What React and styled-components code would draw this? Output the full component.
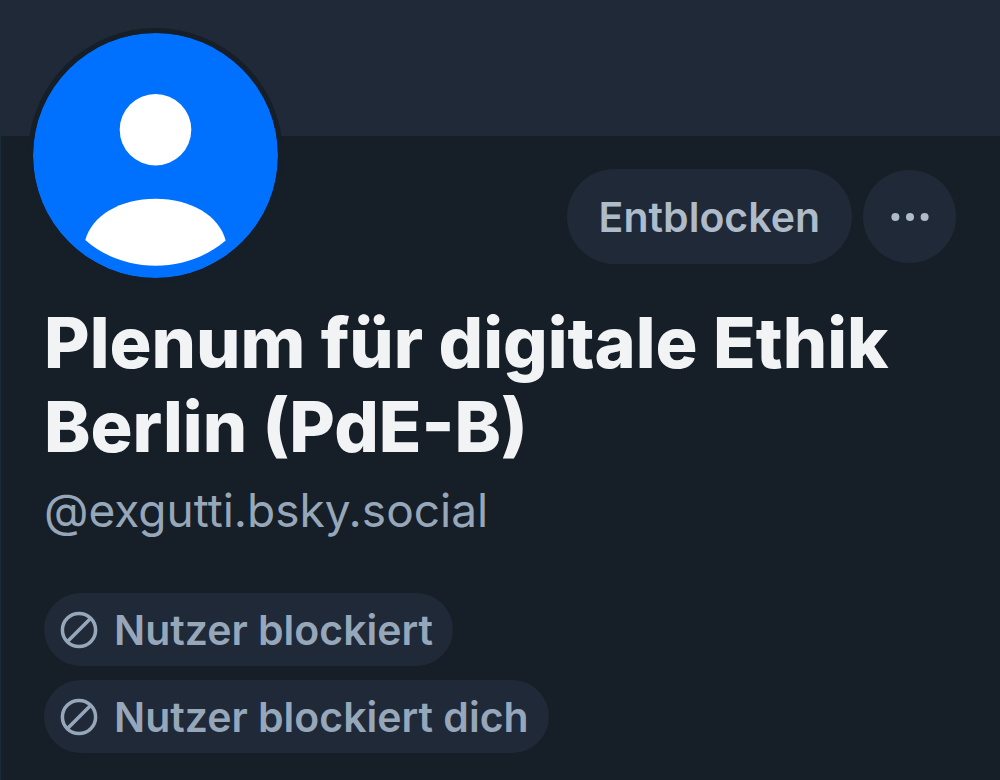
import React from "react";
import styled, { createGlobalStyle, ThemeProvider } from "styled-components";

const theme = {
  background: "#161e27",
  surface: "#202938",
  edge: "#1b2a36",
  accent: "#0070ff",
  title: "#f1f3f5",
  muted: "#96a7ba",
  label: "#aebbc9",
};

const GlobalStyle = createGlobalStyle`
  *, *::before, *::after { box-sizing: border-box; }
  body {
    margin: 0;
    background: ${theme.background};
    font-family: Inter, "Liberation Sans", sans-serif;
  }
`;

const Profile = styled.main`
  min-height: 100vh;
  background: ${(p) => p.theme.background};
  border-left: 1px solid ${(p) => p.theme.edge};
`;

const Banner = styled.div`
  height: 136px;
  background: ${(p) => p.theme.surface};
`;

const Header = styled.header`
  display: flex;
  justify-content: space-between;
  align-items: flex-start;
  padding: 0 44px 0 27px;
`;

const Avatar = styled.svg`
  display: block;
  flex: none;
  width: 255px;
  height: 255px;
  margin-top: -108px;
  border: 5px solid ${(p) => p.theme.background};
  border-radius: 50%;
  background: ${(p) => p.theme.background};
`;

const Actions = styled.div`
  display: flex;
  align-items: center;
  gap: 11px;
  padding-top: 33px;
`;

const Button = styled.button`
  display: flex;
  align-items: center;
  justify-content: center;
  width: ${(p) => (p.$round ? "93px" : "auto")};
  height: ${(p) => (p.$round ? "93px" : "95px")};
  padding: ${(p) => (p.$round ? "0" : "0 32px")};
  border: 0;
  border-radius: 48px;
  background: ${(p) => p.theme.surface};
  color: ${(p) => p.theme.label};
  font: 600 41px/48px Inter, "Liberation Sans", sans-serif;
  cursor: pointer;
`;

const Details = styled.section`
  padding: 18px 44px 28px 43px;
`;

const Name = styled.h1`
  margin: 0;
  color: ${(p) => p.theme.title};
  font-size: 70px;
  font-weight: 800;
  line-height: 84px;
`;

const Handle = styled.p`
  margin: 13px 0 0;
  color: ${(p) => p.theme.muted};
  font-size: 46px;
  line-height: 56px;
`;

const Labels = styled.ul`
  display: flex;
  flex-direction: column;
  align-items: flex-start;
  gap: 14px;
  margin: 55px 0 0;
  padding: 0;
  list-style: none;
`;

const Label = styled.li`
  display: flex;
  align-items: center;
  gap: 16px;
  height: 73px;
  padding: 0 20px 0 16px;
  border-radius: 37px;
  background: ${(p) => p.theme.surface};
  color: ${(p) => p.theme.muted};
  font-size: 41px;
  font-weight: 600;
  line-height: 48px;
`;

const Icon = styled.svg`
  display: block;
  flex: none;
`;

const BlockedIcon = () => (
  <Icon width="38" height="38" viewBox="0 0 38 38" fill="none" stroke="currentColor" strokeWidth="3.5" aria-hidden="true">
    <circle cx="19" cy="19" r="16.6" />
    <path d="M7.5 30.5 30.5 7.5" />
  </Icon>
);

const MoreIcon = () => (
  <Icon width="40" height="10" viewBox="0 0 40 10" fill="currentColor" aria-hidden="true">
    <circle cx="5.4" cy="5" r="4" />
    <circle cx="20" cy="5" r="4" />
    <circle cx="34.6" cy="5" r="4" />
  </Icon>
);

const labels = ["Nutzer blockiert", "Nutzer blockiert dich"];

export default function App() {
  return (
    <ThemeProvider theme={theme}>
      <GlobalStyle />
      <Profile>
        <Banner />
        <Header>
          <Avatar viewBox="0 0 245 245" role="img" aria-label="Avatar">
            <circle cx="122.5" cy="122.5" r="122.5" fill={theme.accent} />
            <circle cx="122.5" cy="96.7" r="35.8" fill="#fff" />
            <path d="M52.3 207C59 182.500 87 165.700 122.500 165.700S186 182.500 192.700 207.500C174 223.500 149 232.700 122.500 232.700S71 223.500 52.300 207Z" fill="#fff" />
          </Avatar>
          <Actions>
            <Button type="button">Entblocken</Button>
            <Button type="button" $round aria-label="Mehr Optionen">
              <MoreIcon />
            </Button>
          </Actions>
        </Header>
        <Details>
          <Name>Plenum für digitale Ethik Berlin (PdE-B)</Name>
          <Handle>@exgutti.bsky.social</Handle>
          <Labels>
            {labels.map((text) => (
              <Label key={text}>
                <BlockedIcon />
                {text}
              </Label>
            ))}
          </Labels>
        </Details>
      </Profile>
    </ThemeProvider>
  );
}
